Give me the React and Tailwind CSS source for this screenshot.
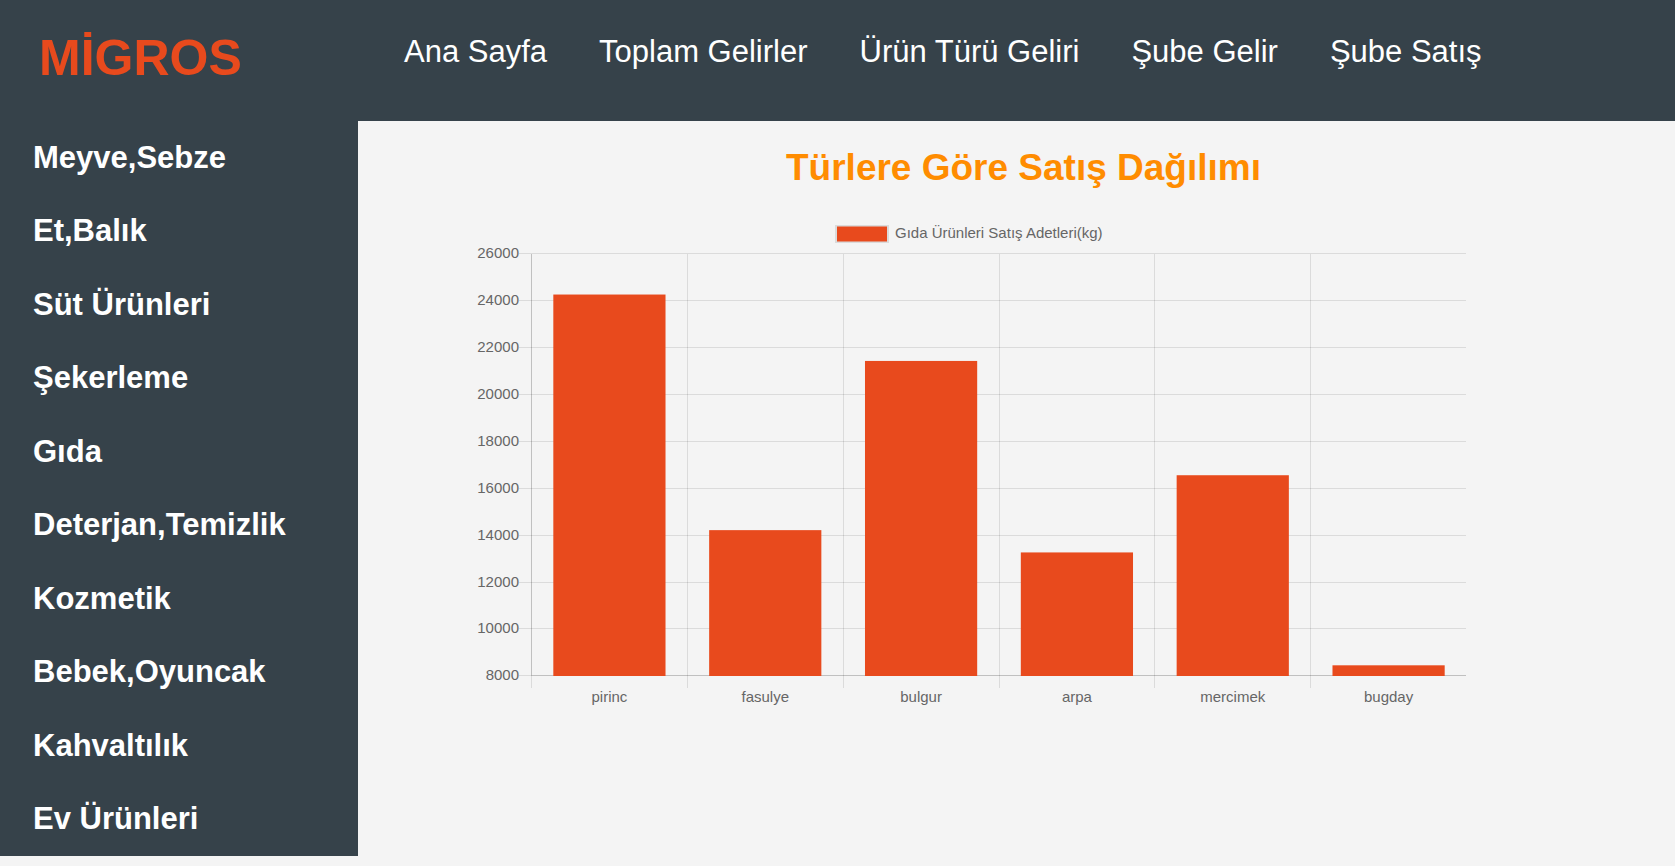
const navLinks = ["Ana Sayfa", "Toplam Gelirler", "Ürün Türü Geliri", "Şube Gelir", "Şube Satış"];

const categories = [
  "Meyve,Sebze",
  "Et,Balık",
  "Süt Ürünleri",
  "Şekerleme",
  "Gıda",
  "Deterjan,Temizlik",
  "Kozmetik",
  "Bebek,Oyuncak",
  "Kahvaltılık",
  "Ev Ürünleri",
];

const sales = [
  { name: "pirinc", amount: 24230 },
  { name: "fasulye", amount: 14190 },
  { name: "bulgur", amount: 21400 },
  { name: "arpa", amount: 13240 },
  { name: "mercimek", amount: 16530 },
  { name: "bugday", amount: 8430 },
];

const MIN = 8000;
const MAX = 26000;
const STEP = 2000;
const LEFT = 65;
const RIGHT = 1000;
const TOP = 33;
const BOTTOM = 455;
const SLOT = (RIGHT - LEFT) / sales.length;
const BAR = SLOT * 0.72;

const yOf = (value) => BOTTOM + 0.4 - ((value - MIN) / (MAX - MIN)) * (BOTTOM + 0.4 - TOP);

function SalesChart() {
  const ticks = [];
  for (let v = MAX; v >= MIN; v -= STEP) ticks.push(v);

  return (
    <svg
      viewBox="0 0 1010 500"
      role="img"
      aria-label="Gıda Ürünleri Satış Adetleri(kg)"
      className="block w-full max-w-[1010px] text-[15px]"
      fill="#666666"
    >
      <rect x="369" y="5" width="54" height="18" fill="#dbdbdb" />
      <rect x="371" y="6.5" width="50" height="15" fill="#e84a1d" />
      <text x="429" y="18">Gıda Ürünleri Satış Adetleri(kg)</text>

      {ticks.map((v) => {
        const y = Math.round(yOf(v)) + 0.5;
        return (
          <g key={v}>
            <line x1={LEFT - 12} x2={RIGHT} y1={y} y2={y} stroke="#000000" strokeOpacity="0.1" />
            <text x={LEFT - 12} y={y + 4.5} textAnchor="end">{v}</text>
          </g>
        );
      })}

      {sales.map((s, i) => {
        const x = Math.round(LEFT + i * SLOT) + 0.5;
        return (
          <line key={s.name} x1={x} x2={x} y1={TOP + 1} y2={BOTTOM + 13} stroke="#000000" strokeOpacity="0.1" />
        );
      })}
      <path
        d={`M${LEFT + 0.5} ${TOP + 1}V${BOTTOM}M${LEFT} ${BOTTOM + 0.5}H${RIGHT}`}
        stroke="#000000"
        strokeOpacity="0.12"
      />

      {sales.map((s, i) => {
        const x = LEFT + 0.5 + i * SLOT + (SLOT - BAR) / 2;
        const y = yOf(s.amount);
        return (
          <g key={s.name}>
            <rect x={x} y={y} width={BAR} height={BOTTOM + 1 - y} fill="#e84a1d" />
            <text x={x + BAR / 2} y={BOTTOM + 27} textAnchor="middle">{s.name}</text>
          </g>
        );
      })}
    </svg>
  );
}

export default function App() {
  return (
    <div className="flex min-h-screen flex-col bg-[#f4f4f4] font-['Liberation_Sans',Arial,sans-serif]">
      <header className="flex h-[121px] items-start bg-[#36424a]">
        <div className="w-[358px] shrink-0 pt-7 pl-[39px]">
          <a href="#" className="text-[50px] leading-[60px] font-bold text-[#e84a1d]">MİGROS</a>
        </div>
        <nav className="pt-8 pl-[46px]">
          <ul className="flex gap-[52px] text-[31px] leading-[40px] whitespace-nowrap text-white">
            {navLinks.map((label) => (
              <li key={label}>
                <a href="#">{label}</a>
              </li>
            ))}
          </ul>
        </nav>
      </header>

      <div className="flex flex-1">
        <aside className="mb-[10px] flex w-[358px] shrink-0 bg-[#36424a]">
          <ul className="flex flex-1 flex-col pl-[33px] text-[31px] leading-[40px] font-bold text-white">
            {categories.map((label) => (
              <li key={label} className="flex flex-1 items-center">
                <a href="#">{label}</a>
              </li>
            ))}
          </ul>
        </aside>

        <main className="min-w-0 flex-1">
          <h1 className="pt-6 pl-[14px] text-center text-[37px] leading-[46px] font-bold text-[#ff8c00]">
            Türlere Göre Satış Dağılımı
          </h1>
          <div className="mt-[29px] pl-[108px]">
            <SalesChart />
          </div>
        </main>
      </div>
    </div>
  );
}
